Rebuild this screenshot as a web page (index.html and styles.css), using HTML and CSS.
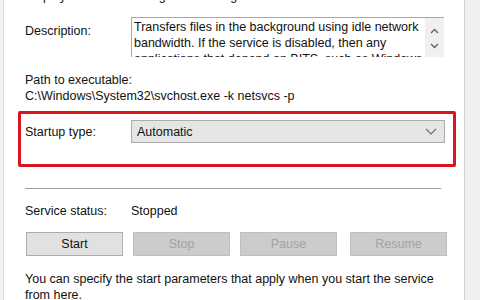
FILE: index.html
```html
<!DOCTYPE html>
<html lang="en">
<head>
    <meta charset="UTF-8">
    <title>Service Properties</title>
    <link rel="stylesheet" href="styles.css">
</head>
<body>
    <div class="panel">
        <div class="row name-row">
            <span class="label">Display name:</span>
            <span class="value">Background Intelligent Transfer Service</span>
        </div>
        <div class="row desc-row">
            <span class="label">Description:</span>
            <div class="textbox">
                <div class="textbox-text">Transfers files in the background using idle network bandwidth. If the service is disabled, then any applications that depend on BITS, such as Windows Update or MSN Explorer, will be unable to automatically download programs and other information.</div>
                <div class="scrollbar">
                    <svg width="9" height="6" viewBox="0 0 9 6"><path d="M1 5 L4.5 1.5 L8 5" fill="none" stroke="#606060" stroke-width="1.3"/></svg>
                    <svg width="9" height="6" viewBox="0 0 9 6"><path d="M1 1 L4.5 4.5 L8 1" fill="none" stroke="#606060" stroke-width="1.3"/></svg>
                </div>
            </div>
        </div>
        <div class="path-label">Path to executable:</div>
        <div class="path-value">C:\Windows\System32\svchost.exe -k netsvcs -p</div>
        <div class="highlight">
            <div class="row startup-row">
                <span class="label">Startup type:</span>
                <div class="combo">
                    <span>Automatic</span>
                    <svg width="12" height="7" viewBox="0 0 12 7"><path d="M1 1 L6 6 L11 1" fill="none" stroke="#707070" stroke-width="1.2"/></svg>
                </div>
            </div>
        </div>
        <div class="separator"></div>
        <div class="row status-row">
            <span class="label">Service status:</span>
            <span class="value">Stopped</span>
        </div>
        <div class="buttons">
            <button class="btn">Start</button>
            <button class="btn" disabled>Stop</button>
            <button class="btn" disabled>Pause</button>
            <button class="btn resume" disabled>Resume</button>
        </div>
        <p class="hint">You can specify the start parameters that apply when you start the service from here.</p>
    </div>
</body>
</html>
```

FILE: styles.css
```css
body {
    margin: 0;
    background-color: #f0f0f0;
    font-family: 'Liberation Sans', Arial, sans-serif;
    font-size: 12.5px;
    line-height: 16px;
    color: #111;
}

.panel {
    margin-left: 3px;
    width: 462px;
    height: 300px;
    padding-left: 21px;
    box-sizing: border-box;
    background: white;
    border-left: 1px solid #dcdcdc;
    border-right: 1px solid #d4d4d4;
    overflow: hidden;
}

.row {
    display: flex;
}

.label {
    width: 106px;
    flex-shrink: 0;
}

.name-row {
    margin-top: -12px;
}

.desc-row {
    margin-top: 13px;
}

.desc-row .label {
    padding-top: 6px;
}

.textbox {
    display: flex;
    width: 313px;
    height: 40px;
    box-sizing: border-box;
    border-top: 1px solid #a8a8a8;
    border-left: 1px solid #a8a8a8;
    overflow: hidden;
}

.textbox-text {
    flex: 1;
    height: 39px;
    box-sizing: border-box;
    overflow: hidden;
    padding: 1px 0 0 2px;
}

.scrollbar {
    width: 19px;
    flex-shrink: 0;
    background: #f0f0f0;
    display: flex;
    flex-direction: column;
    align-items: center;
    justify-content: space-around;
    padding: 6px 0 4px;
    box-sizing: border-box;
}

.path-label {
    margin-top: 15px;
}

.highlight {
    margin-top: 7px;
    margin-left: -7px;
    width: 438px;
    box-sizing: border-box;
    border: 3px solid #d9141c;
    border-radius: 2px;
    padding: 6px 0 21px 4px;
}

.startup-row {
    align-items: center;
}

.combo {
    display: flex;
    align-items: center;
    justify-content: space-between;
    width: 314px;
    height: 23px;
    box-sizing: border-box;
    padding: 0 7px 0 5px;
    background: #e5e5e5;
    border: 1px solid #acacac;
}

.separator {
    margin-top: 21px;
    width: 416px;
    height: 1px;
    background: #a0a0a0;
}

.status-row {
    margin-top: 14px;
}

.buttons {
    display: flex;
    gap: 10px;
    margin-top: 13px;
    margin-left: 1px;
}

.btn {
    width: 97px;
    height: 24px;
    font: inherit;
    color: #111;
    background: #e1e1e1;
    border: 1px solid #adadad;
    padding: 0;
}

.btn:disabled {
    color: #a3a3a3;
    background: #cccccc;
    border-color: #bfbfbf;
}

.btn.resume {
    margin-left: 3px;
}

.hint {
    margin: 15px 0 0;
    width: 425px;
}
```
